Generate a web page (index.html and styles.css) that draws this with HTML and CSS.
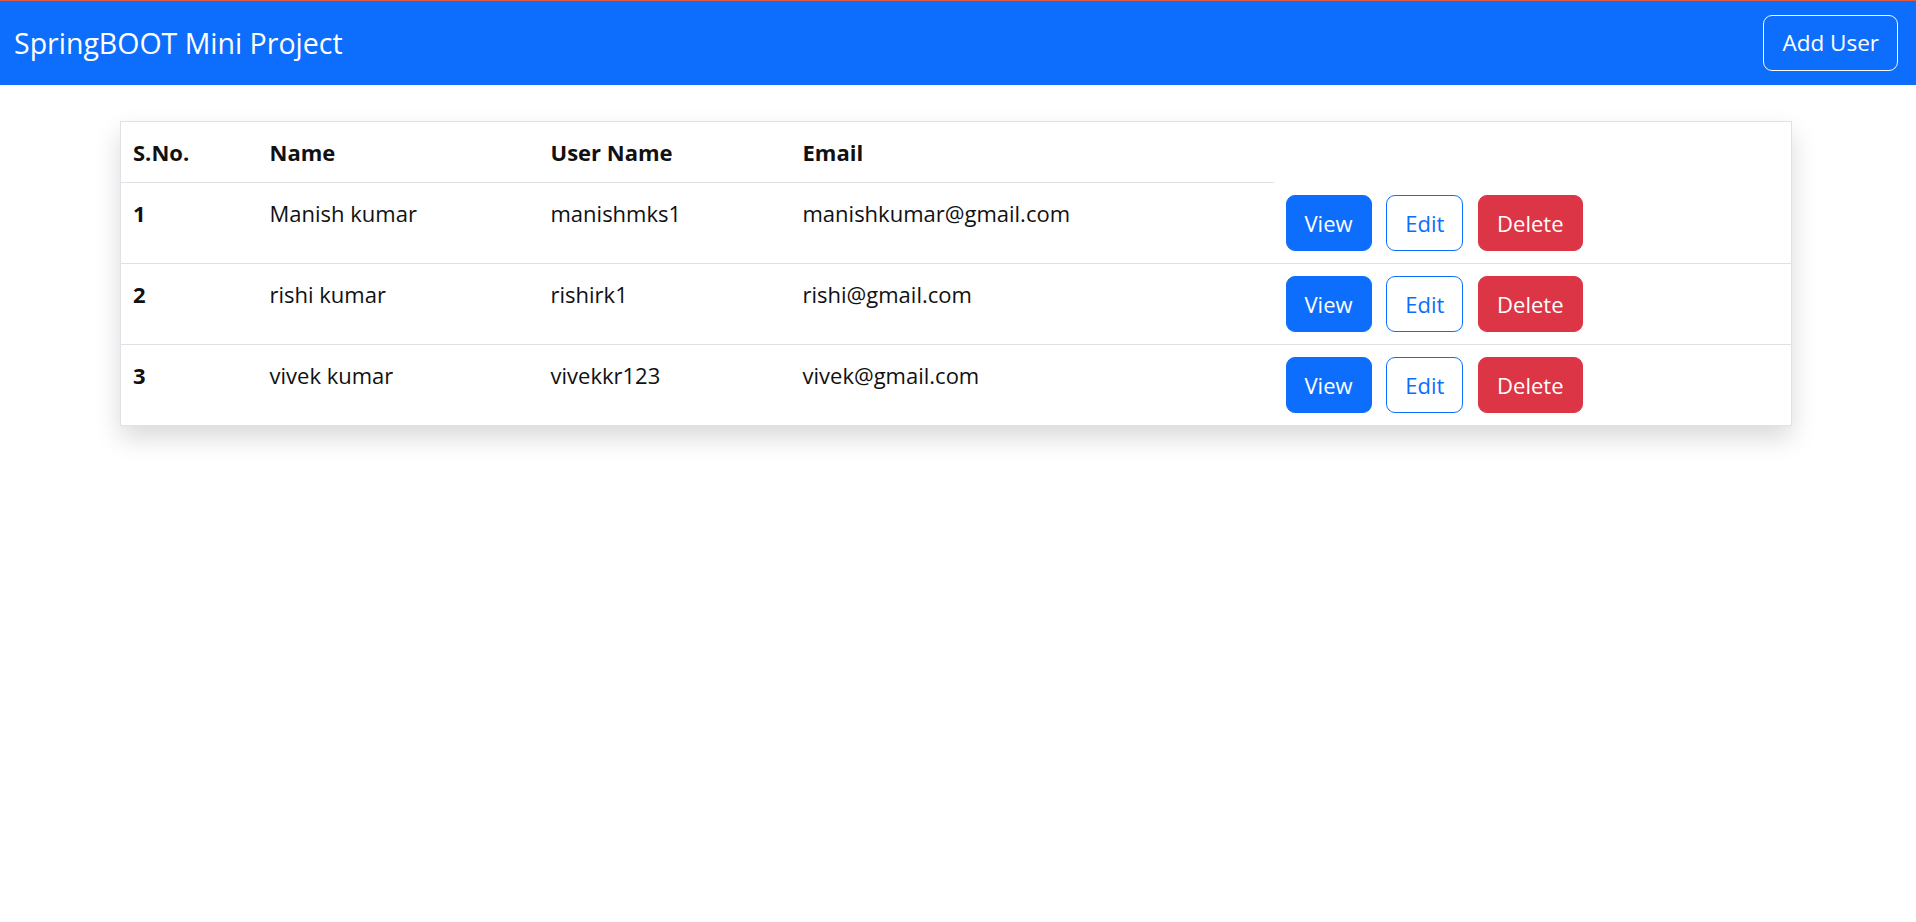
FILE: index.html
```html
<!DOCTYPE html>
<html lang="en">
<head>
  <meta charset="UTF-8" />
  <meta name="viewport" content="width=device-width, initial-scale=1.0"/>
  <title>SpringBOOT Mini Project</title>
  <link rel="stylesheet" href="styles.css">
</head>
<body>

  <!-- Navbar -->
  <nav class="navbar">
    <span class="brand">SpringBOOT Mini Project</span>
    <a class="btn btn-outline-light" href="#">Add User</a>
  </nav>

  <!-- Users table -->
  <div class="container">
    <table class="users">
      <colgroup>
        <col class="col-sno">
        <col class="col-name">
        <col class="col-user">
        <col class="col-email">
        <col>
      </colgroup>
      <thead>
        <tr>
          <th>S.No.</th>
          <th>Name</th>
          <th>User Name</th>
          <th>Email</th>
        </tr>
      </thead>
      <tbody>
        <tr>
          <th>1</th>
          <td>Manish kumar</td>
          <td>manishmks1</td>
          <td>manishkumar@gmail.com</td>
          <td>
            <a class="btn btn-primary" href="#">View</a>
            <a class="btn btn-outline-primary" href="#">Edit</a>
            <a class="btn btn-danger" href="#">Delete</a>
          </td>
        </tr>
        <tr>
          <th>2</th>
          <td>rishi kumar</td>
          <td>rishirk1</td>
          <td>rishi@gmail.com</td>
          <td>
            <a class="btn btn-primary" href="#">View</a>
            <a class="btn btn-outline-primary" href="#">Edit</a>
            <a class="btn btn-danger" href="#">Delete</a>
          </td>
        </tr>
        <tr>
          <th>3</th>
          <td>vivek kumar</td>
          <td>vivekkr123</td>
          <td>vivek@gmail.com</td>
          <td>
            <a class="btn btn-primary" href="#">View</a>
            <a class="btn btn-outline-primary" href="#">Edit</a>
            <a class="btn btn-danger" href="#">Delete</a>
          </td>
        </tr>
      </tbody>
    </table>
  </div>

</body>
</html>
```

FILE: styles.css
```css
body {
  margin: 0;
  font-family: "Open Sans", "Noto Sans", Arial, sans-serif;
  font-size: 22px;
  line-height: 36px;
  color: #111;
  background: #fff;
}

.navbar {
  height: 84px;
  border-top: 1px solid #de5842;
  background-color: #0d6efd;
  display: flex;
  justify-content: space-between;
  align-items: center;
  padding: 0 18px 0 14px;
}

.navbar .brand {
  color: #fff;
  font-size: 28.5px;
}

.btn {
  display: inline-block;
  padding: 9px 18px;
  border: 1px solid transparent;
  border-radius: 9px;
  font-size: 22px;
  line-height: 36px;
  text-decoration: none;
  margin-right: 9px;
}

.navbar .btn {
  margin-right: 0;
  font-size: 22.5px;
  padding: 9px 18px;
}

.btn-outline-light {
  color: #fff;
  border-color: #f8f9fa;
}

.btn-primary {
  background: #0d6efd;
  border-color: #0d6efd;
  color: #fff;
}

.btn-outline-primary {
  background: #fff;
  border-color: #0d6efd;
  color: #0d6efd;
}

.btn-danger {
  background: #dc3545;
  border-color: #dc3545;
  color: #fff;
}

.container {
  width: 1672px;
  margin: 36px 0 36px 120px;
}

.users {
  width: 100%;
  table-layout: fixed;
  border-collapse: collapse;
  border: 1px solid #dee2e6;
  box-shadow: 0 12px 24px rgba(0,0,0,0.15);
}

.col-sno { width: 137px; }
.col-name { width: 281px; }
.col-user { width: 252px; }
.col-email { width: 483px; }

.users th,
.users td {
  padding: 12px;
  text-align: left;
  vertical-align: top;
  white-space: nowrap;
}

.users thead th {
  border-bottom: 1px solid #dee2e6;
}

.users tbody th,
.users tbody td {
  border-bottom: 1px solid #dee2e6;
}
```
